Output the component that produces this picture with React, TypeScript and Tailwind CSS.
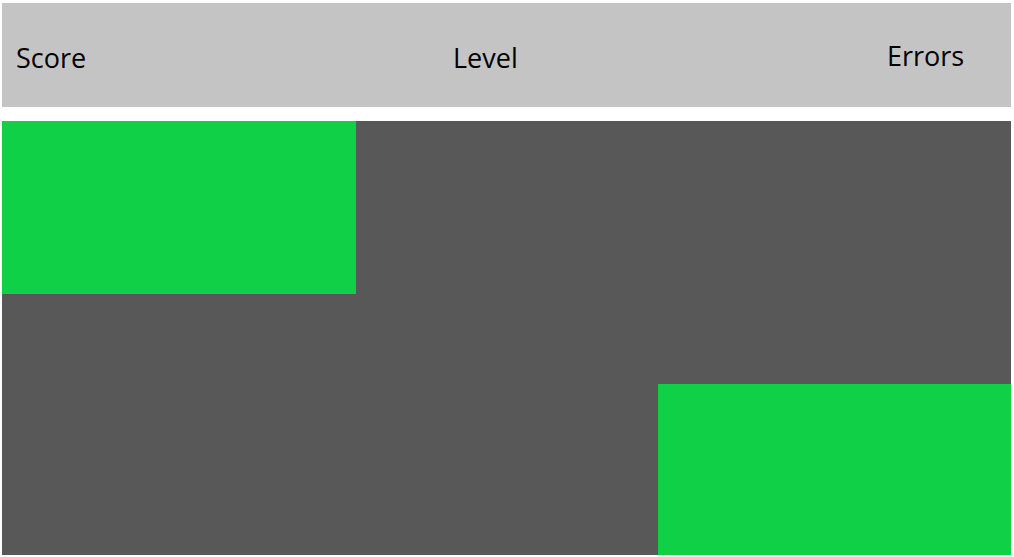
export default function App() {
  return (
    <div className="w-[1014px] h-[557px] bg-white pl-[2px] pt-[3px] flex flex-col gap-[14px] font-['Open_Sans',sans-serif]">
      <div className="w-[1009px] h-[104px] bg-[#c4c4c4] flex items-center pl-[14px] text-[27px] text-black">
        <div className="w-[437px] pt-[7px]">Score</div>
        <div className="w-[434px] pt-[7px]">Level</div>
        <div className="pt-[3px]">Errors</div>
      </div>
      <div className="w-[1009px] h-[434px] bg-[#585858] flex flex-col justify-between">
        <div className="w-[354px] h-[173px] bg-[#10d048]" />
        <div className="self-end w-[353px] h-[171px] bg-[#10d048]" />
      </div>
    </div>
  );
}
